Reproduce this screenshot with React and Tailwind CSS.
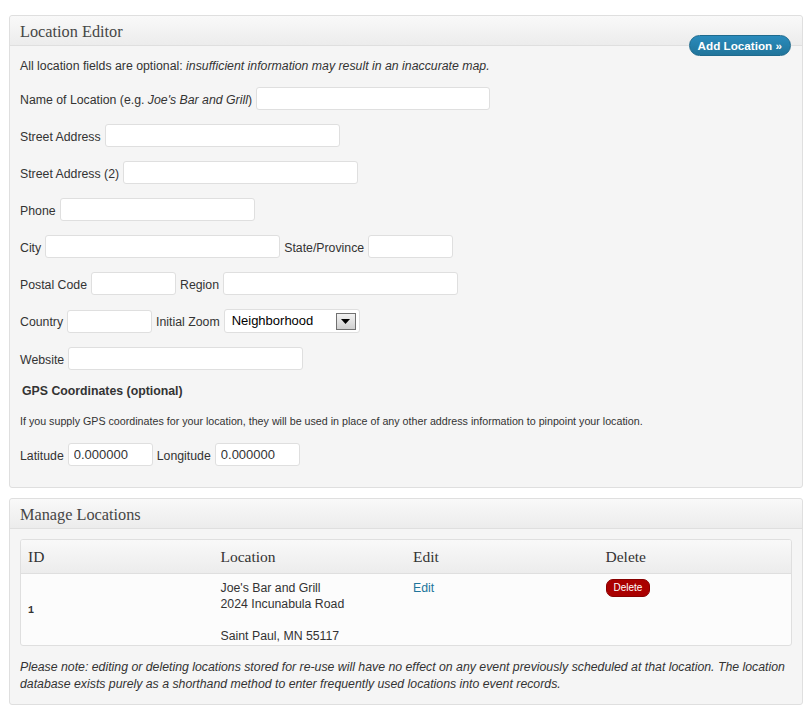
import React from "react";

const sans = "font-['Liberation_Sans',Arial,sans-serif]";
const serif = "font-['Liberation_Serif',Georgia,serif]";

function Field({ w, value }) {
  return (
    <input
      readOnly
      value={value || ""}
      className={`h-[23px] rounded-[3px] border border-[#dfdfdf] bg-white px-[5px] text-[13px] text-[#333] outline-none ${w}`}
    />
  );
}

function Label({ children, gap }) {
  return (
    <span className={`mr-[4px] block pt-[2px] text-[12.3px] leading-[16px] text-[#333] ${gap ? "ml-[4px]" : ""}`}>
      {children}
    </span>
  );
}

function Row({ children, h = "h-[23px]" }) {
  return <div className={`flex items-center ${h}`}>{children}</div>;
}

function Panel({ title, children, extra }) {
  return (
    <section className="relative mx-[7px] ml-[9px] rounded-[3px] border border-[#dfdfdf] bg-[#f5f5f5]">
      <div className="h-[30px] rounded-t-[3px] border-b border-[#dfdfdf] bg-gradient-to-b from-[#f9f9f9] to-[#ececec] px-[10px]">
        <h2 className={`${serif} text-[16.3px] leading-[31px] text-[#464646]`}>{title}</h2>
      </div>
      {extra}
      {children}
    </section>
  );
}

export default function App() {
  return (
    <div className={`${sans} min-h-[720px] bg-white pt-[15px] text-[#333]`}>
      {/* Location editor */}
      <Panel
        title="Location Editor"
        extra={
          <button className="absolute right-[11px] top-[19px] h-[21px] rounded-full border border-[#1e6a8d] bg-gradient-to-b from-[#2a8bbc] to-[#21759b] px-[8px] text-[11.7px] font-bold text-white">
            Add Location »
          </button>
        }
      >
        <div className="px-[10px] pb-[21px] pt-[11px]">
          <p className="text-[12.3px] leading-[18px]">
            All location fields are optional: <em>insufficient information may result in an inaccurate map.</em>
          </p>
          <div className="mt-[12px] flex flex-col gap-[14px]">
            <Row>
              <Label>
                Name of Location (e.g. <em>Joe's Bar and Grill</em>)
              </Label>
              <Field w="w-[234px]" />
            </Row>
            <Row>
              <Label>Street Address</Label>
              <Field w="w-[235px]" />
            </Row>
            <Row>
              <Label>Street Address (2)</Label>
              <Field w="w-[235px]" />
            </Row>
            <Row>
              <Label>Phone</Label>
              <Field w="w-[195px]" />
            </Row>
            <Row>
              <Label>City</Label>
              <Field w="w-[235px]" />
              <Label gap>State/Province</Label>
              <Field w="w-[85px]" />
            </Row>
            <Row>
              <Label>Postal Code</Label>
              <Field w="w-[85px]" />
              <Label gap>Region</Label>
              <Field w="w-[235px]" />
            </Row>
            <Row h="h-[24px]">
              <Label>Country</Label>
              <Field w="w-[85px]" />
              <Label gap>Initial Zoom</Label>
              <div className="flex h-[24px] w-[136px] items-center justify-between rounded-[3px] border border-[#dfdfdf] bg-white pl-[7px] pr-[3px]">
                <span className="text-[13px] text-black">Neighborhood</span>
                <span className="flex h-[17px] w-[20px] items-center justify-center border border-[#707070] bg-gradient-to-b from-[#f2f2f2] to-[#cfcfcf]">
                  <svg width="9" height="5" viewBox="0 0 9 5">
                    <path d="M0 0h9L4.5 5z" fill="#000" />
                  </svg>
                </span>
              </div>
            </Row>
            <Row>
              <Label>Website</Label>
              <Field w="w-[235px]" />
            </Row>
          </div>
          <h4 className="ml-[2px] mt-[13px] text-[12.3px] font-bold leading-[16px] text-[#333]">GPS Coordinates (optional)</h4>
          <p className="mt-[15px] text-[10.7px] leading-[14px]">
            If you supply GPS coordinates for your location, they will be used in place of any other address information to pinpoint your location.
          </p>
          <div className="mt-[15px]">
            <Row>
              <Label>Latitude</Label>
              <Field w="w-[85px]" value="0.000000" />
              <Label gap>Longitude</Label>
              <Field w="w-[85px]" value="0.000000" />
            </Row>
          </div>
        </div>
      </Panel>

      {/* Manage locations */}
      <div className="mt-[10px]">
        <Panel title="Manage Locations">
          <div className="px-[10px] pb-[11px] pt-[10px]">
            <table className="w-full table-fixed border-separate border-spacing-0 overflow-hidden rounded-[3px] border border-[#dfdfdf] bg-[#fcfcfc]">
              <thead>
                <tr className="bg-gradient-to-b from-[#f9f9f9] to-[#ececec]">
                  {["ID", "Location", "Edit", "Delete"].map((h) => (
                    <th
                      key={h}
                      className={`${serif} h-[34px] border-b border-[#dfdfdf] px-[7px] text-left text-[15.5px] font-normal text-[#333]`}
                    >
                      {h}
                    </th>
                  ))}
                </tr>
              </thead>
              <tbody>
                <tr className="align-top text-[12.3px] leading-[16px]">
                  <td className="px-[7px] align-middle">
                    <span className="font-['Liberation_Mono',monospace] text-[10px] font-bold">1</span>
                  </td>
                  <td className="px-[7px] pb-[1px] pt-[6px] text-[#333]">
                    Joe's Bar and Grill
                    <br />
                    2024 Incunabula Road
                    <br />
                    <br />
                    Saint Paul, MN 55117
                  </td>
                  <td className="px-[7px] pt-[6px]">
                    <a className="text-[#21759b]">Edit</a>
                  </td>
                  <td className="px-[7px] pt-[5px]">
                    <span className="inline-block h-[18px] rounded-[7px] border border-[#800] bg-[#a00] px-[7px] text-[10px] leading-[16px] text-white">
                      Delete
                    </span>
                  </td>
                </tr>
              </tbody>
            </table>
            <p className="mt-[13px] text-[12.3px] italic leading-[17px]">
              Please note: editing or deleting locations stored for re-use will have no effect on any event previously scheduled at that location. The location database exists purely as a shorthand method to enter frequently used locations into event records.
            </p>
          </div>
        </Panel>
      </div>
    </div>
  );
}
